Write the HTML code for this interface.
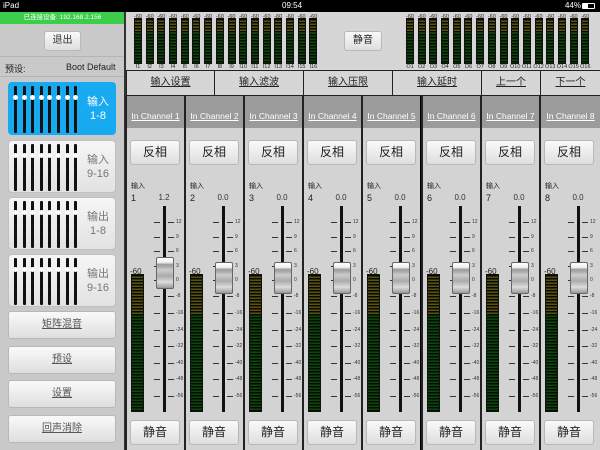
<!DOCTYPE html>
<html><head><meta charset="utf-8"><style>
*{margin:0;padding:0;box-sizing:border-box}
body{width:600px;height:450px;overflow:hidden;background:#000;font-family:"Liberation Sans","Noto Sans CJK SC",sans-serif;position:relative}
.a{position:absolute}
#sb{left:0;top:0;width:600px;height:12px;color:#fff;font-size:8px}
#left{left:0;top:12px;width:125px;height:438px;background:#c9c9c9}
.btn{position:absolute;background:linear-gradient(#fafafa,#dedede);border:1px solid #b8b8b8;border-radius:3px;text-align:center;color:#333}
.tile{position:absolute;left:8px;width:108px;height:53px;border-radius:4px;background:linear-gradient(#f6f6f6,#e2e2e2);border:1px solid #c0c0c0}
.tile.sel{background:#18aaf0;border-color:#18aaf0}
.fd{position:absolute;left:5px;top:3px;width:68px;height:47px}
.fd b{position:absolute;top:0;width:3px;height:47px;background:#111;border-radius:1px}
.fd b::after{content:"";position:absolute;left:-1px;top:9px;width:5px;height:5px;border-radius:50%;background:#fff}
.tl{position:absolute;left:72px;top:12px;width:34px;text-align:center;font-size:11px;line-height:14px;color:#777}
.sel .tl{color:#fff}
.lb{position:absolute;left:8px;width:108px;height:28px;font-size:10px;line-height:26px;text-decoration:underline;color:#555}
#hdr{left:126px;top:12px;width:474px;height:58px;background:#d6d6d6}
.mg{position:absolute;top:0;display:flex;gap:3.7px}
.m{width:8px;position:relative;height:58px}
.m span{position:absolute;left:-3px;width:14px;text-align:center;font-size:5.5px;color:#222}
.m .t{top:2px}.m .bt{top:52px}
.m i{position:absolute;left:0;top:6px;width:8px;height:46px;background:repeating-linear-gradient(#050d03 0 1.5px,transparent 1.5px 3px),linear-gradient(#5e5010 0 32%,#0b470c 32%);border:1px solid #111}
#tabs{left:126px;top:70px;width:474px;height:26px;background:#d6d6d6}
.tab{position:absolute;top:0;height:26px;border-left:1px solid #222;border-top:1px solid #222;border-bottom:1px solid #222;text-align:center;font-size:10px;line-height:24px;text-decoration:underline;color:#222}
.st{position:absolute;top:96px;width:59px;height:354px;background:#d3d3d3;border-left:2px solid #222}
.st .h{position:absolute;left:0;top:0;width:100%;height:32px;background:#9b9b9b;color:#fff;font-size:8.5px;text-align:center;line-height:40px;text-decoration:underline}
.st .b1{position:absolute;left:3px;top:44px;width:50px;height:25px;font-size:12px;line-height:23px;color:#222}
.st .b2{position:absolute;left:3px;top:324px;width:50px;height:25px;font-size:12px;line-height:23px;color:#222}
.st .in{position:absolute;left:4px;top:85px;font-size:7px;color:#222}
.st .n{position:absolute;left:4px;top:97px;font-size:9px;color:#222}
.st .v{position:absolute;left:26px;width:22px;text-align:center;top:97px;font-size:8px;color:#333}
.st .tr{position:absolute;left:36px;top:110px;width:3px;height:206px;background:#111}
.st .s{position:absolute;left:3px;top:171px;font-size:8px;color:#222}
.st .mt{position:absolute;left:4px;top:178px;width:13px;height:138px;background:repeating-linear-gradient(#050d03 0 1.5px,transparent 1.5px 3px),linear-gradient(#5e5010 0 29%,#0b470c 29%);border:1px solid #111}
.st i{position:absolute;left:49px;font-size:5px;font-style:normal;color:#333;line-height:6px;margin-top:-3px}
.st i::before,.st i::after{content:"";position:absolute;top:3px;width:6px;height:1px;background:#333}
.st i::before{left:-22px}.st i::after{left:-8px}
.st .k{position:absolute;left:29px;top:166px;width:18px;height:32px;border-radius:2px;background:linear-gradient(#fff 0,#eee 15%,#999 22%,#ccc 40%,#aaa 60%,#ddd 80%,#999 100%);border:1px solid #666}
</style></head><body>
<div id="sb" class="a"><span class="a" style="left:3px;top:1px">iPad</span><span class="a" style="left:282px;top:1px">09:54</span><span class="a" style="left:565px;top:1px">44%</span><span class="a" style="left:582px;top:3px;width:13px;height:6px;border:1px solid #fff;border-radius:1px"><span class="a" style="left:0;top:0;width:5px;height:4px;background:#fff"></span></span></div>
<div id="left" class="a">
<div class="a" style="left:0;top:0;width:125px;height:12px;background:#3ccd4a;color:#fff;font-size:6.5px;text-align:center;line-height:12px">已连接设备: 192.168.2.156</div>
<div class="btn" style="left:44px;top:19px;width:37px;height:20px;font-size:10px;line-height:18px">退出</div>
<div class="a" style="left:0;top:44px;width:125px;height:1px;background:#b5b5b5"></div>
<div class="a" style="left:5px;top:50px;font-size:9px;color:#222">预设:</div>
<div class="a" style="left:66px;top:50px;font-size:9px;color:#222">Boot Default</div>
<div class="a" style="left:0;top:64px;width:125px;height:1px;background:#b5b5b5"></div>
<div class="tile sel" style="top:70px"><div class="fd"><b style="left:0"></b><b style="left:8.6px"></b><b style="left:17.2px"></b><b style="left:25.8px"></b><b style="left:34.4px"></b><b style="left:43px"></b><b style="left:51.6px"></b><b style="left:60.2px"></b></div><div class="tl">输入<br>1-8</div></div>
<div class="tile" style="top:128px"><div class="fd"><b style="left:0"></b><b style="left:8.6px"></b><b style="left:17.2px"></b><b style="left:25.8px"></b><b style="left:34.4px"></b><b style="left:43px"></b><b style="left:51.6px"></b><b style="left:60.2px"></b></div><div class="tl">输入<br>9-16</div></div>
<div class="tile" style="top:185px"><div class="fd"><b style="left:0"></b><b style="left:8.6px"></b><b style="left:17.2px"></b><b style="left:25.8px"></b><b style="left:34.4px"></b><b style="left:43px"></b><b style="left:51.6px"></b><b style="left:60.2px"></b></div><div class="tl">输出<br>1-8</div></div>
<div class="tile" style="top:242px"><div class="fd"><b style="left:0"></b><b style="left:8.6px"></b><b style="left:17.2px"></b><b style="left:25.8px"></b><b style="left:34.4px"></b><b style="left:43px"></b><b style="left:51.6px"></b><b style="left:60.2px"></b></div><div class="tl">输出<br>9-16</div></div>
<div class="btn lb" style="top:299px">矩阵混音</div>
<div class="btn lb" style="top:334px">预设</div>
<div class="btn lb" style="top:368px">设置</div>
<div class="btn lb" style="top:403px">回声消除</div>
</div>
<div class="a" style="left:124px;top:12px;width:2px;height:438px;background:#333"></div>
<div id="hdr" class="a">
<div class="mg" style="left:8px">
<div class="m"><span class="t">-60</span><i></i><span class="bt">I1</span></div><div class="m"><span class="t">-60</span><i></i><span class="bt">I2</span></div><div class="m"><span class="t">-60</span><i></i><span class="bt">I3</span></div><div class="m"><span class="t">-60</span><i></i><span class="bt">I4</span></div><div class="m"><span class="t">-60</span><i></i><span class="bt">I5</span></div><div class="m"><span class="t">-60</span><i></i><span class="bt">I6</span></div><div class="m"><span class="t">-60</span><i></i><span class="bt">I7</span></div><div class="m"><span class="t">-60</span><i></i><span class="bt">I8</span></div><div class="m"><span class="t">-60</span><i></i><span class="bt">I9</span></div><div class="m"><span class="t">-60</span><i></i><span class="bt">I10</span></div><div class="m"><span class="t">-60</span><i></i><span class="bt">I11</span></div><div class="m"><span class="t">-60</span><i></i><span class="bt">I12</span></div><div class="m"><span class="t">-60</span><i></i><span class="bt">I13</span></div><div class="m"><span class="t">-60</span><i></i><span class="bt">I14</span></div><div class="m"><span class="t">-60</span><i></i><span class="bt">I15</span></div><div class="m"><span class="t">-60</span><i></i><span class="bt">I16</span></div>
</div>
<div class="btn" style="left:218px;top:19px;width:38px;height:20px;font-size:10px;line-height:18px;color:#222">静音</div>
<div class="mg" style="left:280px">
<div class="m"><span class="t">-60</span><i></i><span class="bt">O1</span></div><div class="m"><span class="t">-60</span><i></i><span class="bt">O2</span></div><div class="m"><span class="t">-60</span><i></i><span class="bt">O3</span></div><div class="m"><span class="t">-60</span><i></i><span class="bt">O4</span></div><div class="m"><span class="t">-60</span><i></i><span class="bt">O5</span></div><div class="m"><span class="t">-60</span><i></i><span class="bt">O6</span></div><div class="m"><span class="t">-60</span><i></i><span class="bt">O7</span></div><div class="m"><span class="t">-60</span><i></i><span class="bt">O8</span></div><div class="m"><span class="t">-60</span><i></i><span class="bt">O9</span></div><div class="m"><span class="t">-60</span><i></i><span class="bt">O10</span></div><div class="m"><span class="t">-60</span><i></i><span class="bt">O11</span></div><div class="m"><span class="t">-60</span><i></i><span class="bt">O12</span></div><div class="m"><span class="t">-60</span><i></i><span class="bt">O13</span></div><div class="m"><span class="t">-60</span><i></i><span class="bt">O14</span></div><div class="m"><span class="t">-60</span><i></i><span class="bt">O15</span></div><div class="m"><span class="t">-60</span><i></i><span class="bt">O16</span></div>
</div>
</div>
<div id="tabs" class="a">
<div class="tab" style="left:0;width:88px">输入设置</div>
<div class="tab" style="left:88px;width:89px">输入滤波</div>
<div class="tab" style="left:177px;width:89px">输入压限</div>
<div class="tab" style="left:266px;width:89px">输入延时</div>
<div class="tab" style="left:355px;width:59px">上一个</div>
<div class="tab" style="left:414px;width:60px">下一个</div>
</div>

<div class="st" style="left:125px"><div class="h">In Channel 1</div><div class="btn b1">反相</div><div class="in">输入</div><div class="n">1</div><div class="v">1.2</div><div class="s">-60</div><div class="mt"></div><div class="tr"></div><i style="top:126px">12</i><i style="top:141px">9</i><i style="top:155px">6</i><i style="top:170px">3</i><i style="top:184px">0</i><i style="top:200px">-8</i><i style="top:217px">-16</i><i style="top:234px">-24</i><i style="top:250px">-32</i><i style="top:267px">-40</i><i style="top:283px">-48</i><i style="top:300px">-56</i><div class="k" style="top:161px"></div><div class="btn b2">静音</div></div>
<div class="st" style="left:184px"><div class="h">In Channel 2</div><div class="btn b1">反相</div><div class="in">输入</div><div class="n">2</div><div class="v">0.0</div><div class="s">-60</div><div class="mt"></div><div class="tr"></div><i style="top:126px">12</i><i style="top:141px">9</i><i style="top:155px">6</i><i style="top:170px">3</i><i style="top:184px">0</i><i style="top:200px">-8</i><i style="top:217px">-16</i><i style="top:234px">-24</i><i style="top:250px">-32</i><i style="top:267px">-40</i><i style="top:283px">-48</i><i style="top:300px">-56</i><div class="k"></div><div class="btn b2">静音</div></div>
<div class="st" style="left:243px"><div class="h">In Channel 3</div><div class="btn b1">反相</div><div class="in">输入</div><div class="n">3</div><div class="v">0.0</div><div class="s">-60</div><div class="mt"></div><div class="tr"></div><i style="top:126px">12</i><i style="top:141px">9</i><i style="top:155px">6</i><i style="top:170px">3</i><i style="top:184px">0</i><i style="top:200px">-8</i><i style="top:217px">-16</i><i style="top:234px">-24</i><i style="top:250px">-32</i><i style="top:267px">-40</i><i style="top:283px">-48</i><i style="top:300px">-56</i><div class="k"></div><div class="btn b2">静音</div></div>
<div class="st" style="left:302px"><div class="h">In Channel 4</div><div class="btn b1">反相</div><div class="in">输入</div><div class="n">4</div><div class="v">0.0</div><div class="s">-60</div><div class="mt"></div><div class="tr"></div><i style="top:126px">12</i><i style="top:141px">9</i><i style="top:155px">6</i><i style="top:170px">3</i><i style="top:184px">0</i><i style="top:200px">-8</i><i style="top:217px">-16</i><i style="top:234px">-24</i><i style="top:250px">-32</i><i style="top:267px">-40</i><i style="top:283px">-48</i><i style="top:300px">-56</i><div class="k"></div><div class="btn b2">静音</div></div>
<div class="st" style="left:361px"><div class="h">In Channel 5</div><div class="btn b1">反相</div><div class="in">输入</div><div class="n">5</div><div class="v">0.0</div><div class="s">-60</div><div class="mt"></div><div class="tr"></div><i style="top:126px">12</i><i style="top:141px">9</i><i style="top:155px">6</i><i style="top:170px">3</i><i style="top:184px">0</i><i style="top:200px">-8</i><i style="top:217px">-16</i><i style="top:234px">-24</i><i style="top:250px">-32</i><i style="top:267px">-40</i><i style="top:283px">-48</i><i style="top:300px">-56</i><div class="k"></div><div class="btn b2">静音</div></div>
<div class="st" style="left:421px"><div class="h">In Channel 6</div><div class="btn b1">反相</div><div class="in">输入</div><div class="n">6</div><div class="v">0.0</div><div class="s">-60</div><div class="mt"></div><div class="tr"></div><i style="top:126px">12</i><i style="top:141px">9</i><i style="top:155px">6</i><i style="top:170px">3</i><i style="top:184px">0</i><i style="top:200px">-8</i><i style="top:217px">-16</i><i style="top:234px">-24</i><i style="top:250px">-32</i><i style="top:267px">-40</i><i style="top:283px">-48</i><i style="top:300px">-56</i><div class="k"></div><div class="btn b2">静音</div></div>
<div class="st" style="left:480px"><div class="h">In Channel 7</div><div class="btn b1">反相</div><div class="in">输入</div><div class="n">7</div><div class="v">0.0</div><div class="s">-60</div><div class="mt"></div><div class="tr"></div><i style="top:126px">12</i><i style="top:141px">9</i><i style="top:155px">6</i><i style="top:170px">3</i><i style="top:184px">0</i><i style="top:200px">-8</i><i style="top:217px">-16</i><i style="top:234px">-24</i><i style="top:250px">-32</i><i style="top:267px">-40</i><i style="top:283px">-48</i><i style="top:300px">-56</i><div class="k"></div><div class="btn b2">静音</div></div>
<div class="st" style="left:539px;width:61px"><div class="h">In Channel 8</div><div class="btn b1">反相</div><div class="in">输入</div><div class="n">8</div><div class="v">0.0</div><div class="s">-60</div><div class="mt"></div><div class="tr"></div><i style="top:126px">12</i><i style="top:141px">9</i><i style="top:155px">6</i><i style="top:170px">3</i><i style="top:184px">0</i><i style="top:200px">-8</i><i style="top:217px">-16</i><i style="top:234px">-24</i><i style="top:250px">-32</i><i style="top:267px">-40</i><i style="top:283px">-48</i><i style="top:300px">-56</i><div class="k"></div><div class="btn b2">静音</div></div>
</body></html>
